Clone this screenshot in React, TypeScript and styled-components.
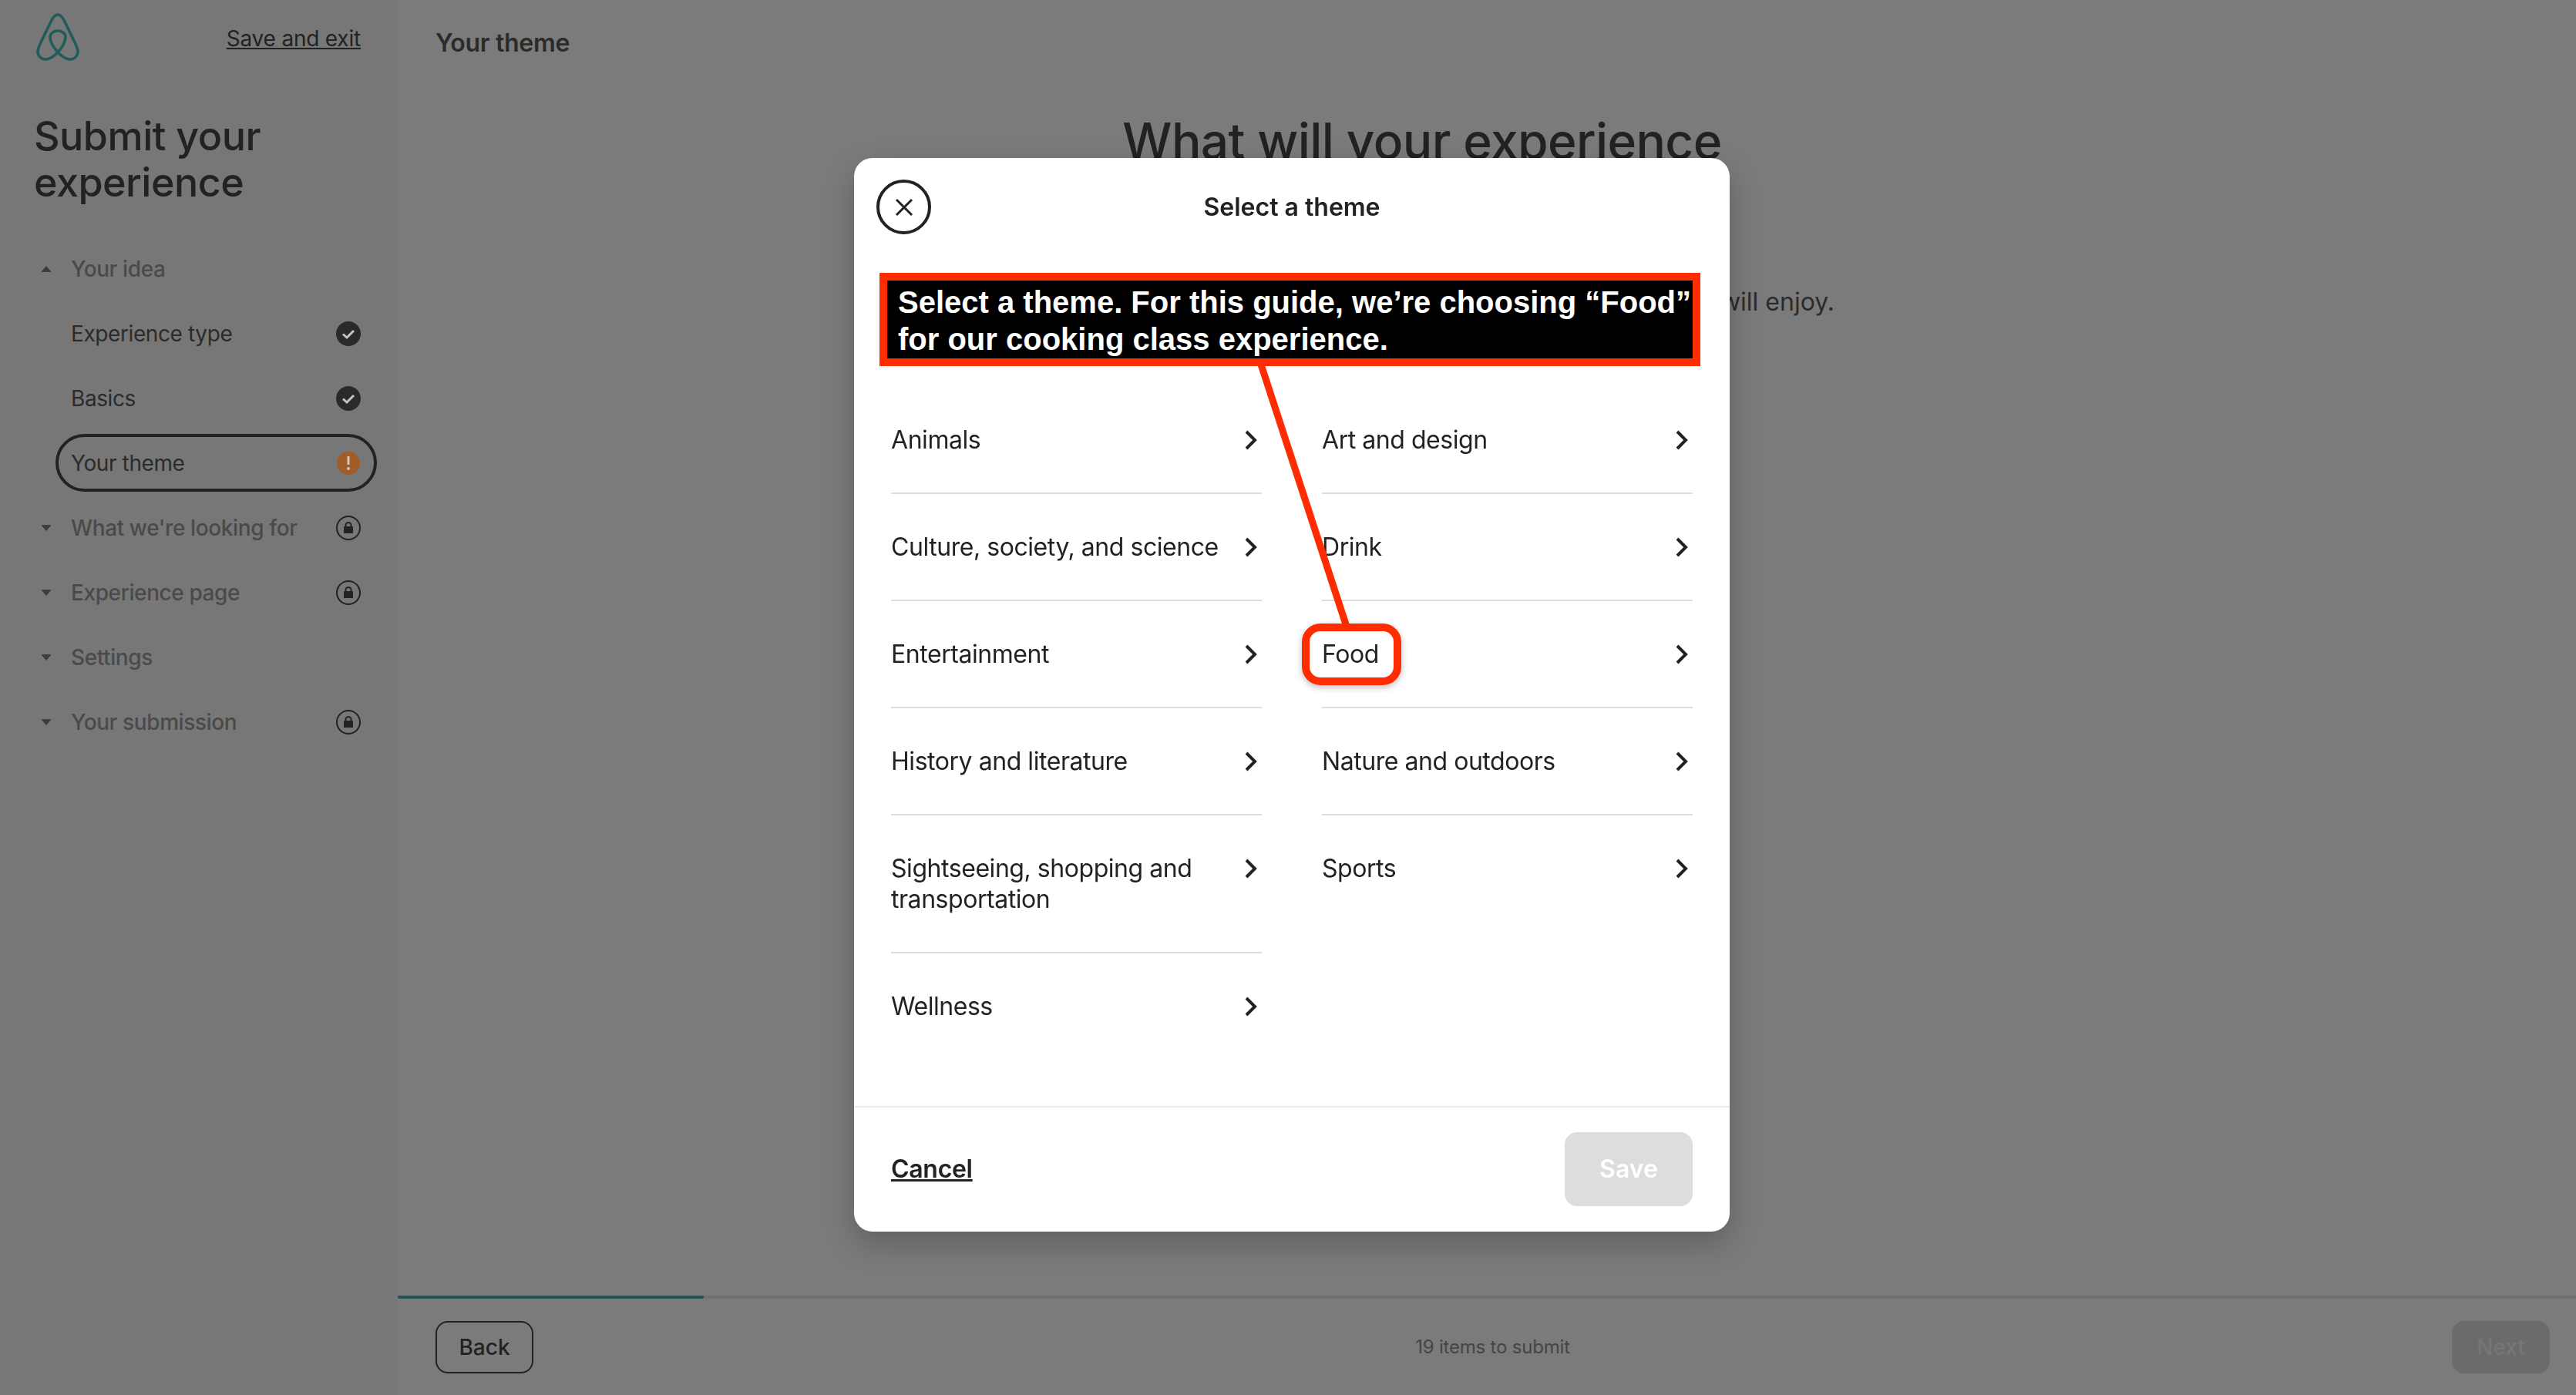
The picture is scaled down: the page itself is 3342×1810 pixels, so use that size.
import React from 'react';
import styled, { createGlobalStyle } from 'styled-components';

const GlobalStyle = createGlobalStyle`
  html, body {
    margin: 0;
    padding: 0;
    height: 100%;
    overflow: hidden;
    background: #7b7b7b;
    font-family: Inter, "Noto Sans", sans-serif;
    color: #222222;
  }
  *, *::before {
    box-sizing: border-box;
  }
`;

const leftThemes = [
  'Animals',
  'Culture, society, and science',
  'Entertainment',
  'History and literature',
  'Sightseeing, shopping and transportation',
  'Wellness',
];
const rightThemes = ['Art and design', 'Drink', 'Food', 'Nature and outdoors', 'Sports'];

type Status = 'done' | 'warn' | 'lock' | 'none';

const navItems: { label: string; kind: 'open' | 'closed' | 'sub' | 'active'; status: Status }[] = [
  { label: 'Your idea', kind: 'open', status: 'none' },
  { label: 'Experience type', kind: 'sub', status: 'done' },
  { label: 'Basics', kind: 'sub', status: 'done' },
  { label: 'Your theme', kind: 'active', status: 'warn' },
  { label: "What we're looking for", kind: 'closed', status: 'lock' },
  { label: 'Experience page', kind: 'closed', status: 'lock' },
  { label: 'Settings', kind: 'closed', status: 'none' },
  { label: 'Your submission', kind: 'closed', status: 'lock' },
];

function Logo() {
  return (
    <svg width="56" height="62" viewBox="0 0 56 62" fill="none">
      <path
        d="M28 51 C22 57 17 60 12 60 C6 60 2 55 2 50 C2 46 4 42 6 38 L20 9 C23 4 25 2 28 2 C31 2 33 4 36 9 L50 38 C52 42 54 46 54 50 C54 55 50 60 44 60 C39 60 34 57 28 51 C22 44 18 37 18 31 C18 26 23 23 28 23 C33 23 38 26 38 31 C38 37 34 44 28 51 Z"
        stroke="#1f5c5a"
        strokeWidth="3.6"
        strokeLinejoin="round"
      />
    </svg>
  );
}

function StatusIcon({ status }: { status: Status }) {
  if (status === 'done') {
    return (
      <svg width="32" height="32" viewBox="0 0 32 32">
        <circle cx="16" cy="16" r="16" fill="#2a2a2a" />
        <path d="M9 16.5 L14 21 L23 12" fill="none" stroke="#c4c4c4" strokeWidth="3" />
      </svg>
    );
  }
  if (status === 'warn') {
    return (
      <svg width="32" height="32" viewBox="0 0 32 32">
        <circle cx="16" cy="16" r="15" fill="#a15c28" />
        <path d="M16 7 V18" stroke="#d8c4b4" strokeWidth="3" />
        <circle cx="16" cy="23" r="2" fill="#d8c4b4" />
      </svg>
    );
  }
  if (status === 'lock') {
    return (
      <svg width="32" height="32" viewBox="0 0 32 32">
        <circle cx="16" cy="16" r="15" fill="none" stroke="#222222" strokeWidth="2" />
        <rect x="10" y="14" width="12" height="9" rx="1" fill="#222222" />
        <path d="M12.5 14.5 V12.5 A3.5 3.5 0 0 1 19.5 12.5 V14.5" fill="none" stroke="#222222" strokeWidth="2" />
      </svg>
    );
  }
  return null;
}

function Caret({ up }: { up: boolean }) {
  return (
    <svg width="14" height="8" viewBox="0 0 14 8">
      <path
        d={up ? 'M1 7.5 H13 L7 0.5 Z' : 'M1 0.5 H13 L7 7.5 Z'}
        fill="#3c3c3c"
        stroke="#3c3c3c"
        strokeWidth="0.8"
        strokeLinejoin="round"
      />
    </svg>
  );
}

function Chevron() {
  return (
    <ChevronWrap>
      <svg width="16" height="26" viewBox="0 0 16 26" fill="none">
        <path d="M2 2 L13 13 L2 24" stroke="#222222" strokeWidth="4" />
      </svg>
    </ChevronWrap>
  );
}

function ThemeList({ items }: { items: string[] }) {
  return (
    <ThemeColumn>
      {items.map((item, i) => (
        <ThemeRow key={item} $last={i === items.length - 1}>
          <ThemeName>{item}</ThemeName>
          <Chevron />
        </ThemeRow>
      ))}
    </ThemeColumn>
  );
}

export default function App() {
  return (
    <Page>
      <GlobalStyle />
      <Sidebar>
        <SidebarTop>
          <Logo />
          <SaveLink>Save and exit</SaveLink>
        </SidebarTop>
        <SidebarTitle>Submit your experience</SidebarTitle>
        <Nav>
          {navItems.map((item) => (
            <NavRow key={item.label} $active={item.kind === 'active'}>
              <CaretSlot>
                {item.kind === 'open' && <Caret up />}
                {item.kind === 'closed' && <Caret up={false} />}
              </CaretSlot>
              <NavLabel $section={item.kind === 'open' || item.kind === 'closed'}>{item.label}</NavLabel>
              <StatusIcon status={item.status} />
            </NavRow>
          ))}
        </Nav>
      </Sidebar>
      <Main>
        <TopTitle>Your theme</TopTitle>
        <Content>
          <Heading>What will your experience</Heading>
          <Intro>will enjoy.</Intro>
        </Content>
        <Progress>
          <ProgressFill />
        </Progress>
        <BottomBar>
          <BackButton>Back</BackButton>
          <ItemsLeft>19 items to submit</ItemsLeft>
          <NextButton>Next</NextButton>
        </BottomBar>
      </Main>
      <Overlay>
        <Modal>
          <ModalHeader>
            <CloseButton>
              <svg width="26" height="26" viewBox="0 0 26 26" fill="none">
                <path d="M3 3 L23 23 M23 3 L3 23" stroke="#222222" strokeWidth="3" />
              </svg>
            </CloseButton>
            <ModalTitle>Select a theme</ModalTitle>
          </ModalHeader>
          <ThemeGrid>
            <ThemeList items={leftThemes} />
            <ThemeList items={rightThemes} />
          </ThemeGrid>
          <ModalFooter>
            <CancelLink>Cancel</CancelLink>
            <SaveButton>Save</SaveButton>
          </ModalFooter>
          <Callout>
            Select a theme. For this guide, we’re choosing “Food” for our cooking class experience.
          </Callout>
          <CalloutLine width="130" height="345" viewBox="0 0 130 345">
            <path d="M4 0 L115 340" stroke="#fe2c00" strokeWidth="9" fill="none" />
          </CalloutLine>
          <FoodMark />
        </Modal>
      </Overlay>
    </Page>
  );
}

const Page = styled.div`
  display: flex;
  width: 3342px;
  height: 1810px;
  overflow: hidden;
`;

const Sidebar = styled.aside`
  width: 516px;
  flex-shrink: 0;
  background: #777777;
  padding: 17px 48px 0 44px;
`;

const SidebarTop = styled.div`
  display: flex;
  justify-content: space-between;
  align-items: flex-start;
  padding-left: 3px;
  height: 130px;
`;

const SaveLink = styled.a`
  font-size: 28px;
  line-height: 34px;
  margin-top: 16px;
  letter-spacing: -0.2px;
  text-decoration: underline;
  color: #222222;
`;

const SidebarTitle = styled.h1`
  margin: 0 0 40px;
  width: 340px;
  font-size: 52px;
  line-height: 60px;
  font-weight: 500;
  letter-spacing: -0.5px;
  color: #222222;
`;

const Nav = styled.nav`
  display: flex;
  flex-direction: column;
  margin-top: 23px;
`;

const NavRow = styled.div<{ $active: boolean }>`
  position: relative;
  display: flex;
  align-items: center;
  height: 84px;
  &::before {
    content: '';
    display: ${(p) => (p.$active ? 'block' : 'none')};
    position: absolute;
    left: 28px;
    right: -21px;
    top: 4px;
    height: 75px;
    border: 4px solid #222222;
    border-radius: 38px;
  }
`;

const CaretSlot = styled.div`
  width: 48px;
  padding-left: 9px;
  display: flex;
  align-items: center;
`;

const NavLabel = styled.span<{ $section: boolean }>`
  flex: 1;
  font-size: 28px;
  letter-spacing: -0.4px;
  font-weight: ${(p) => (p.$section ? 500 : 400)};
  color: ${(p) => (p.$section ? '#4a4a4a' : '#2b2b2b')};
`;

const Main = styled.main`
  flex: 1;
  display: flex;
  flex-direction: column;
  min-width: 0;
`;

const TopTitle = styled.div`
  height: 110px;
  padding: 36px 49px 0;
  font-size: 32px;
  line-height: 40px;
  font-weight: 600;
  letter-spacing: -0.3px;
  color: #2b2b2b;
`;

const Content = styled.div`
  flex: 1;
  width: 1070px;
  margin-left: 794px;
  padding-top: 35px;
`;

const Heading = styled.h2`
  margin: 0;
  font-size: 64px;
  line-height: 76px;
  font-weight: 500;
  letter-spacing: -0.6px;
  text-align: center;
  color: #222222;
`;

const Intro = styled.p`
  margin: 151px 0 0;
  font-size: 32px;
  line-height: 40px;
  text-align: right;
  color: #2b2b2b;
`;

const Progress = styled.div`
  height: 4px;
  background: #717171;
`;

const ProgressFill = styled.div`
  width: 397px;
  height: 100%;
  background: #1f5452;
  border-radius: 2px;
`;

const BottomBar = styled.div`
  height: 125px;
  display: flex;
  align-items: center;
  justify-content: space-between;
  padding: 0 34px 0 49px;
`;

const BackButton = styled.div`
  width: 127px;
  height: 68px;
  display: flex;
  align-items: center;
  justify-content: center;
  border: 2px solid #222222;
  border-radius: 16px;
  font-size: 28px;
  font-weight: 500;
  color: #222222;
`;

const ItemsLeft = styled.div`
  font-size: 24px;
  letter-spacing: -0.2px;
  color: #454545;
`;

const NextButton = styled.div`
  width: 127px;
  height: 68px;
  display: flex;
  align-items: center;
  justify-content: center;
  border-radius: 16px;
  background: #6b6b6b;
  font-size: 28px;
  font-weight: 500;
  color: #767676;
`;

const Overlay = styled.div`
  position: fixed;
  inset: 0;
  padding: 205px 0 0 1108px;
`;

const Modal = styled.div`
  position: relative;
  width: 1136px;
  height: 1393px;
  display: flex;
  flex-direction: column;
  background: #ffffff;
  border-radius: 24px;
  box-shadow: 0 16px 40px rgba(0, 0, 0, 0.22);
`;

const ModalHeader = styled.header`
  position: relative;
  display: flex;
  align-items: center;
  justify-content: center;
  height: 126px;
`;

const CloseButton = styled.div`
  position: absolute;
  left: 29px;
  top: 28px;
  width: 71px;
  height: 71px;
  display: flex;
  align-items: center;
  justify-content: center;
  border: 4px solid #222222;
  border-radius: 50%;
`;

const ModalTitle = styled.div`
  font-size: 32px;
  font-weight: 600;
  color: #222222;
`;

const ThemeGrid = styled.div`
  flex: 1;
  display: grid;
  grid-template-columns: 481px 481px;
  justify-content: space-between;
  align-content: start;
  padding: 171px 48px 0;
`;

const ThemeColumn = styled.div`
  display: flex;
  flex-direction: column;
`;

const ThemeRow = styled.div<{ $last: boolean }>`
  display: flex;
  justify-content: space-between;
  align-items: flex-start;
  gap: 24px;
  padding: 49px 0 48px;
  border-bottom: 2px solid ${(p) => (p.$last ? 'transparent' : '#dddddd')};
`;

const ThemeName = styled.div`
  font-size: 32px;
  line-height: 40px;
  letter-spacing: -0.45px;
  color: #222222;
`;

const ChevronWrap = styled.div`
  flex-shrink: 0;
  display: flex;
  align-items: center;
  height: 40px;
  padding-right: 6px;
`;

const ModalFooter = styled.footer`
  height: 163px;
  display: flex;
  align-items: center;
  justify-content: space-between;
  padding: 0 48px 2px;
  border-top: 2px solid #ebebeb;
`;

const CancelLink = styled.a`
  font-size: 32px;
  font-weight: 600;
  letter-spacing: -0.3px;
  text-decoration: underline;
  color: #222222;
`;

const SaveButton = styled.div`
  width: 166px;
  height: 96px;
  display: flex;
  align-items: center;
  justify-content: center;
  border-radius: 16px;
  background: #dddddd;
  font-size: 32px;
  font-weight: 600;
  color: #ffffff;
`;

const Callout = styled.div`
  position: absolute;
  left: 33px;
  top: 149px;
  width: 1065px;
  height: 121px;
  padding: 4px 0 0 14px;
  background: #000000;
  border: 10px solid #fe2c00;
  font-family: 'Liberation Sans', Arial, sans-serif;
  font-size: 40px;
  font-weight: 700;
  line-height: 48px;
  color: #ffffff;
`;

const CalloutLine = styled.svg`
  position: absolute;
  left: 524px;
  top: 268px;
`;

const FoodMark = styled.div`
  position: absolute;
  left: 581px;
  top: 604px;
  width: 129px;
  height: 80px;
  border: 10px solid #fe2c00;
  border-radius: 24px;
  box-shadow: 0 3px 8px rgba(0, 0, 0, 0.25);
`;
